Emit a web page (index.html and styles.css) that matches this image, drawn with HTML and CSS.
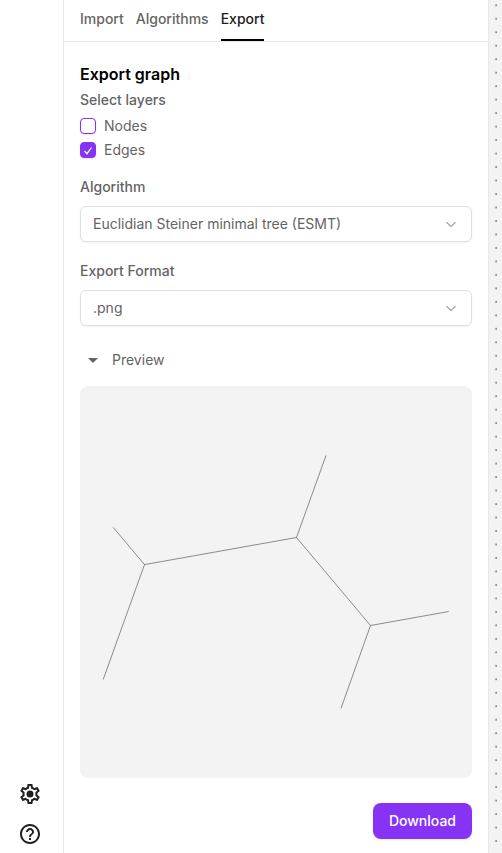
FILE: index.html
```html
<!DOCTYPE html>
<html lang="en">
<head>
  <meta charset="utf-8">
  <meta name="viewport" content="width=device-width, initial-scale=1">
  <title>Export graph</title>
  <link rel="stylesheet" href="styles.css">
</head>
<body>
  <div class="app">
    <aside class="rail">
      <button class="rail-button" type="button" aria-label="Settings">
        <svg viewBox="0 0 24 24" aria-hidden="true">
          <path d="M19.43 12.98c.04-.32.07-.64.07-.98 0-.34-.03-.66-.07-.98l2.11-1.65c.19-.15.24-.42.12-.64l-2-3.46c-.09-.16-.26-.25-.44-.25-.06 0-.12.01-.17.03l-2.49 1c-.52-.4-1.08-.73-1.69-.98l-.38-2.65C14.46 2.18 14.25 2 14 2h-4c-.25 0-.46.18-.49.42l-.38 2.65c-.61.25-1.17.59-1.69.98l-2.49-1c-.06-.02-.12-.03-.18-.03-.17 0-.34.09-.43.25l-2 3.46c-.13.22-.07.49.12.64l2.11 1.65c-.04.32-.07.65-.07.98 0 .33.03.66.07.98l-2.11 1.65c-.19.15-.24.42-.12.64l2 3.46c.09.16.26.25.44.25.06 0 .12-.01.17-.03l2.49-1c.52.4 1.08.73 1.69.98l.38 2.65c.03.24.24.42.49.42h4c.25 0 .46-.18.49-.42l.38-2.65c.61-.25 1.17-.59 1.69-.98l2.49 1c.06.02.12.03.18.03.17 0 .34-.09.43-.25l2-3.46c.12-.22.07-.49-.12-.64l-2.11-1.65zm-1.98-1.71c.04.31.05.52.05.73 0 .21-.02.43-.05.73l-.14 1.13.89.7 1.08.84-.7 1.21-1.27-.51-1.04-.42-.9.68c-.43.32-.84.56-1.25.73l-1.06.43-.16 1.13-.2 1.35h-1.4l-.19-1.35-.16-1.13-1.06-.43c-.43-.18-.83-.41-1.23-.71l-.91-.7-1.06.43-1.27.51-.7-1.21 1.08-.84.89-.7-.14-1.13c-.03-.31-.05-.54-.05-.74s.02-.43.05-.73l.14-1.13-.89-.7-1.08-.84.7-1.21 1.27.51 1.04.42.9-.68c.43-.32.84-.56 1.25-.73l1.06-.43.16-1.13.2-1.35h1.39l.19 1.35.16 1.13 1.06.43c.43.18.83.41 1.23.71l.91.7 1.06-.43 1.27-.51.7 1.21-1.07.85-.89.7.14 1.13z"/>
          <circle cx="12" cy="12" r="3.5"/>
        </svg>
      </button>
      <button class="rail-button" type="button" aria-label="Help">
        <svg viewBox="0 0 24 24" aria-hidden="true">
          <path d="M11 18h2v-2h-2v2zm1-16C6.48 2 2 6.48 2 12s4.48 10 10 10 10-4.48 10-10S17.52 2 12 2zm0 18c-4.41 0-8-3.59-8-8s3.59-8 8-8 8 3.59 8 8-3.59 8-8 8zm0-14c-2.21 0-4 1.79-4 4h2c0-1.1.9-2 2-2s2 .9 2 2c0 2-3 1.75-3 5h2c0-2.25 3-2.5 3-5 0-2.21-1.79-4-4-4z"/>
        </svg>
      </button>
    </aside>

    <main class="panel">
      <nav class="tabs">
        <a class="tab" href="#import">Import</a>
        <a class="tab" href="#algorithms">Algorithms</a>
        <a class="tab tab-active" href="#export" aria-current="page">Export</a>
      </nav>

      <form class="export">
        <h1 class="title">Export graph</h1>

        <fieldset class="layers">
          <legend class="caption">Select layers</legend>
          <label class="check">
            <input class="check-input" type="checkbox">
            <span>Nodes</span>
          </label>
          <label class="check">
            <input class="check-input" type="checkbox" checked>
            <svg class="check-mark" viewBox="0 0 16 16" aria-hidden="true"><path d="M4.500 9l2.500 2.700 4.500-6.200"/></svg>
            <span>Edges</span>
          </label>
        </fieldset>

        <div class="field">
          <label class="caption" for="algorithm">Algorithm</label>
          <div class="select">
            <select class="select-input" id="algorithm">
              <option>Euclidian Steiner minimal tree (ESMT)</option>
            </select>
            <svg class="select-icon" viewBox="0 0 16 16" aria-hidden="true"><path d="M3.500 6.300L8 10.500 12.500 6.300"/></svg>
          </div>
        </div>

        <div class="field">
          <label class="caption" for="format">Export Format</label>
          <div class="select">
            <select class="select-input" id="format">
              <option>.png</option>
            </select>
            <svg class="select-icon" viewBox="0 0 16 16" aria-hidden="true"><path d="M3.500 6.300L8 10.500 12.500 6.300"/></svg>
          </div>
        </div>

        <details class="preview" open>
          <summary class="preview-toggle">
            <svg class="preview-arrow" viewBox="0 0 24 24" aria-hidden="true"><path d="M8 10h10l-5 5z"/></svg>
            Preview
          </summary>
          <svg class="graph" viewBox="0 0 392 392" role="img" aria-label="Steiner tree">
            <path d="M33.300 141.500L64.500 178.600 23.200 293.500M64.500 178.600L216.500 151.500 246 69.500M216.500 151.500L290.500 239.500 368.800 225.500M290.500 239.500L261 322.300"/>
          </svg>
        </details>

        <button class="download" type="button">Download</button>
      </form>
    </main>

    <div class="canvas">
      <svg class="canvas-grid" aria-hidden="true">
        <defs>
          <pattern id="dots" width="20" height="20" patternUnits="userSpaceOnUse" patternTransform="translate(0 -1.500) scale(.674)">
            <circle cx="10.500" cy="10" r="1.200"/>
          </pattern>
        </defs>
        <rect width="100%" height="100%" fill="url(#dots)"/>
      </svg>
    </div>
  </div>
</body>
</html>
```
FILE: styles.css
```css
* {
  box-sizing: border-box;
}

body {
  margin: 0;
  background: #fff;
  color: #646464;
  font: 14px/20px Inter, "Liberation Sans", sans-serif;
}

button,
select {
  font: inherit;
}

.app {
  display: grid;
  grid-template-columns: 64px minmax(0, 1fr) 14px;
  min-height: 100vh;
}

.rail {
  display: flex;
  flex-direction: column;
  justify-content: flex-end;
  gap: 16px;
  padding: 8px 18px 7px;
  border-right: 1px solid #e8e8e8;
}

.rail-button {
  width: 24px;
  height: 24px;
  padding: 0;
  border: 0;
  background: none;
}

.rail-button svg {
  display: block;
  fill: #202020;
}

.tabs {
  display: flex;
  gap: 12px;
  padding: 0 16px;
  border-bottom: 1px solid #e8e8e8;
}

.tab {
  padding: 9px 0 10px;
  border-bottom: 2px solid transparent;
  color: #646464;
  font-weight: 500;
  text-decoration: none;
}

.tab-active {
  border-color: #000;
  color: #202020;
}

.export {
  display: flex;
  flex-direction: column;
  padding: 20px 16px 14px;
}

.title {
  margin: 0;
  color: #000;
  font-size: 16px;
  font-weight: 600;
  line-height: 24px;
}

.caption {
  padding: 0;
  font-weight: 500;
  line-height: 20px;
}

.layers {
  display: flex;
  flex-direction: column;
  gap: 4px;
  min-width: 0;
  margin: 4px 0 0;
  padding: 6px 0 0;
  border: 0;
}

.check {
  display: grid;
  grid-template-columns: 16px 1fr;
  align-items: center;
  column-gap: 8px;
}

.check-input {
  appearance: none;
  grid-area: 1 / 1;
  width: 16px;
  height: 16px;
  margin: 0;
  border: 1px solid #8733f5;
  border-radius: 4px;
  background: #fff;
  box-shadow: 0 1px 2px rgb(0 0 0 / 10%);
}

.check-input:checked {
  background: #8733f5;
}

.check-mark {
  z-index: 1;
  grid-area: 1 / 1;
  fill: none;
  stroke: #fff;
  stroke-width: 1.2;
  pointer-events: none;
}

.check-input:not(:checked) + .check-mark {
  visibility: hidden;
}

.field {
  display: flex;
  flex-direction: column;
  gap: 9px;
  margin-top: 17px;
}

.field + .field {
  margin-top: 19px;
}

.select {
  display: grid;
  align-items: center;
}

.select-input {
  appearance: none;
  grid-area: 1 / 1;
  width: 100%;
  height: 36px;
  padding: 0 36px 0 12px;
  border: 1px solid #e0e0e0;
  border-radius: 6px;
  background: #fff;
  box-shadow: 0 1px 2px rgb(0 0 0 / 5%);
  color: #646464;
}

.select-icon {
  grid-area: 1 / 1;
  justify-self: end;
  width: 16px;
  height: 16px;
  margin-right: 13px;
  fill: none;
  stroke: #a0a0a0;
  stroke-width: 1.2;
  pointer-events: none;
}

.preview {
  margin-top: 20px;
}

.preview-toggle {
  display: flex;
  align-items: center;
  gap: 8px;
  padding: 2px 0;
  line-height: 24px;
  list-style: none;
}

.preview-arrow {
  width: 24px;
  height: 24px;
  fill: #646464;
}

.graph {
  display: block;
  width: 100%;
  margin-top: 12px;
  border-radius: 8px;
  background: #f3f3f3;
  fill: none;
  stroke: #222;
  stroke-width: .5;
}

.download {
  align-self: flex-end;
  height: 36px;
  margin-top: 25px;
  padding: 0 16px;
  border: 0;
  border-radius: 8px;
  background: #8733f5;
  box-shadow: 0 1px 2px rgb(0 0 0 / 10%);
  color: #fff;
  font-weight: 500;
}

.canvas {
  display: grid;
  border-left: 1px solid #e8e8e8;
  background: #f3f3f3;
}

.canvas-grid {
  width: 100%;
  height: 100%;
  fill: #333;
}
```
